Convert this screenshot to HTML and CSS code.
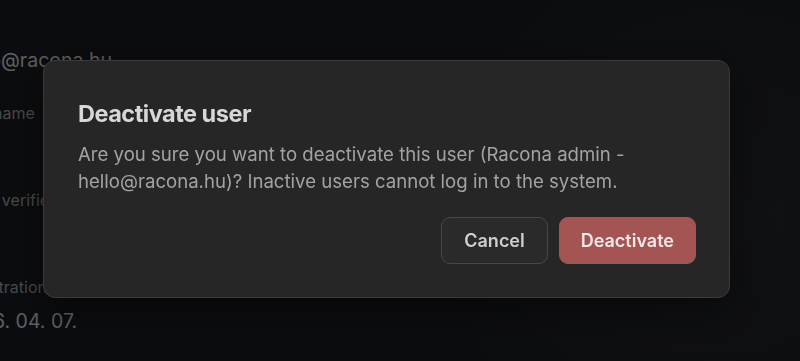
FILE: index.html
```html
<!DOCTYPE html>
<html lang="en">
<head>
    <meta charset="UTF-8">
    <meta name="viewport" content="width=device-width, initial-scale=1.0">
    <title>Users</title>
    <link rel="stylesheet" href="styles.css">
</head>
<body>
    <div class="user-details">
        <div class="detail-row">
            <span class="detail-value">hello@racona.hu</span>
        </div>
        <div class="detail-row">
            <span class="detail-label">Username</span>
            <span class="detail-value">—</span>
        </div>
        <div class="detail-row">
            <span class="detail-label">Email verified</span>
            <span class="detail-value">Yes</span>
        </div>
        <div class="detail-row">
            <span class="detail-label">Registration</span>
            <span class="detail-value">2026. 04. 07.</span>
        </div>
    </div>

    <!-- Modal -->
    <div class="modal">
        <div class="modal-content">
            <h2>Deactivate user</h2>
            <p>Are you sure you want to deactivate this user (Racona admin - hello@racona.hu)? Inactive users cannot log in to the system.</p>
            <div class="modal-actions">
                <button class="btn-cancel">Cancel</button>
                <button class="btn-danger">Deactivate</button>
            </div>
        </div>
    </div>
</body>
</html>
```

FILE: styles.css
```css
:root {
    --bg-color: #0e0f12;
    --card-bg: #262626;
    --card-border: #3a3a3a;
    --text-primary: #d7d7d7;
    --text-secondary: #a3a3a3;
    --danger: #a45553;
}

* {
    box-sizing: border-box;
    margin: 0;
    padding: 0;
}

body {
    font-family: 'Inter', 'Noto Sans', Arial, sans-serif;
    background-color: var(--bg-color);
    background-image: radial-gradient(circle at 90% 60%, rgba(255, 255, 255, 0.025) 0%, transparent 40%);
    color: var(--text-primary);
    height: 100vh;
    overflow: hidden;
}

/* Page behind the dialog */
.user-details {
    display: flex;
    flex-direction: column;
    gap: 29px;
    margin-left: -43px;
    padding-top: 46px;
}

.detail-row {
    display: flex;
    flex-direction: column;
    gap: 10px;
}

.detail-label {
    font-size: 16px;
    line-height: 20px;
    color: #56575a;
}

.detail-value {
    font-size: 19.5px;
    line-height: 28px;
    color: #727375;
}

/* Modal */
.modal {
    position: fixed;
    inset: 0;
    background-color: rgba(0, 0, 0, 0.15);
    display: flex;
    align-items: flex-start;
    padding: 60px 0 0 43px;
}

.modal-content {
    width: 687px;
    background: var(--card-bg);
    border: 1px solid var(--card-border);
    border-radius: 12px;
    padding: 38px 33px 33px 34px;
    box-shadow: 0 10px 40px rgba(0, 0, 0, 0.5);
}

.modal-content h2 {
    font-size: 23.5px;
    line-height: 30px;
    font-weight: 700;
    letter-spacing: -0.5px;
    color: var(--text-primary);
    margin-bottom: 12px;
}

.modal-content p {
    font-size: 18.6px;
    line-height: 27px;
    color: var(--text-secondary);
    margin-bottom: 22px;
}

.modal-actions {
    display: flex;
    justify-content: flex-end;
    gap: 11px;
}

.modal-actions button {
    height: 47px;
    padding: 0 22px;
    border-radius: 9px;
    font-family: inherit;
    font-size: 18px;
    font-weight: 600;
    cursor: pointer;
}

.modal-actions .btn-cancel {
    background: #2a2a2a;
    border: 1px solid #484848;
    color: #cfcfcf;
}

.modal-actions .btn-danger {
    padding: 0 21px;
    background: var(--danger);
    border: 1px solid var(--danger);
    color: #f2e8e8;
}
```
